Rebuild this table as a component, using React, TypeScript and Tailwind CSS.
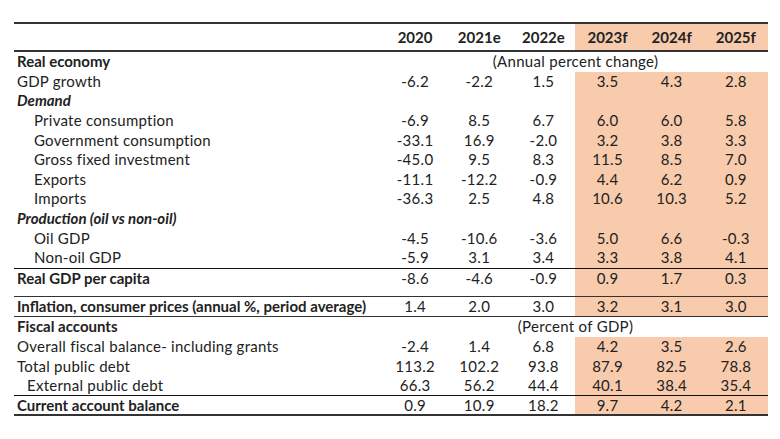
import React from "react";

const OR = "bg-[#f8cbad]";

type Row = {
  label: string;
  kind?: "bold" | "italic" | "normal";
  indent?: "none" | "sm" | "lg";
  vals?: string[];
  note?: string;
  orange?: boolean;
  h?: string;
};

function Cells({ vals, orange }: { vals?: string[]; orange?: boolean }) {
  const v = vals ?? ["", "", "", "", "", ""];
  return (
    <>
      {v.map((x, i) => (
        <div
          key={i}
          className={`w-[64.17px] shrink-0 flex items-center justify-center tracking-[0.3px] ${
            orange && i >= 3 ? OR : ""
          }`}
        >
          {x}
        </div>
      ))}
    </>
  );
}

function DataRow({ r }: { r: Row }) {
  const weight =
    r.kind === "bold"
      ? "font-bold"
      : r.kind === "italic"
      ? "font-bold italic"
      : "tracking-[0.25px]";
  const pad =
    r.indent === "lg" ? "pl-[20px]" : r.indent === "sm" ? "pl-[13px]" : "pl-[3px]";
  return (
    <div className={`flex ${r.h ?? "h-[19.6px]"}`}>
      <div className={`w-[369px] shrink-0 flex items-center whitespace-nowrap ${pad} ${weight}`}>
        {r.label}
      </div>
      {r.note ? (
        <div className="flex-1 flex items-center justify-center tracking-[0.3px]">{r.note}</div>
      ) : (
        <Cells vals={r.vals} orange={r.orange} />
      )}
    </div>
  );
}

export default function App() {
  const block1: Row[] = [
    { label: "Real economy", kind: "bold", note: "(Annual percent change)" },
    { label: "GDP growth", vals: ["-6.2", "-2.2", "1.5", "3.5", "4.3", "2.8"], orange: true },
    { label: "Demand", kind: "italic", orange: true },
    { label: "Private consumption", indent: "lg", vals: ["-6.9", "8.5", "6.7", "6.0", "6.0", "5.8"], orange: true },
    { label: "Government consumption", indent: "lg", vals: ["-33.1", "16.9", "-2.0", "3.2", "3.8", "3.3"], orange: true },
    { label: "Gross fixed investment", indent: "lg", vals: ["-45.0", "9.5", "8.3", "11.5", "8.5", "7.0"], orange: true },
    { label: "Exports", indent: "lg", vals: ["-11.1", "-12.2", "-0.9", "4.4", "6.2", "0.9"], orange: true },
    { label: "Imports", indent: "lg", vals: ["-36.3", "2.5", "4.8", "10.6", "10.3", "5.2"], orange: true },
    { label: "Production (oil vs non-oil)", kind: "italic", orange: true },
    { label: "Oil GDP", indent: "lg", vals: ["-4.5", "-10.6", "-3.6", "5.0", "6.6", "-0.3"], orange: true },
    { label: "Non-oil GDP", indent: "lg", vals: ["-5.9", "3.1", "3.4", "3.3", "3.8", "4.1"], orange: true },
  ];

  return (
    <div
      className="w-[780px] h-[439px] bg-white text-[#222] text-[15px] leading-none pt-[22px] pl-[14px]"
      style={{ fontFamily: "Lato, 'Open Sans', sans-serif" }}
    >
      <div className="w-[754px]">
        <div className="h-[2px] bg-[#333]" />
        <div className="flex h-[26px] font-bold">
          <div className="w-[369px] shrink-0" />
          {["2020", "2021e", "2022e", "2023f", "2024f", "2025f"].map((y, i) => (
            <div
              key={y}
              className={`w-[64.17px] shrink-0 flex items-center justify-center ${
                i >= 3 ? OR : ""
              }`}
            >
              {y}
            </div>
          ))}
        </div>
        <div className="h-[2px] bg-[#333]" />
        {block1.map((r) => (
          <DataRow key={r.label} r={r} />
        ))}
        <div className="h-[1px] bg-[#111]" />
        <DataRow
          r={{
            label: "Real GDP per capita",
            kind: "bold",
            vals: ["-8.6", "-4.6", "-0.9", "0.9", "1.7", "0.3"],
            orange: true,
          }}
        />
        <div className="flex h-[7.5px]">
          <div className="w-[369px] shrink-0" />
          <Cells orange />
        </div>
        <div className="h-[1.5px] bg-[#333]" />
        <DataRow
          r={{
            label: "Inflation, consumer prices (annual %, period average)",
            kind: "bold",
            vals: ["1.4", "2.0", "3.0", "3.2", "3.1", "3.0"],
            orange: true,
            h: "h-[18.5px]",
          }}
        />
        <div className="h-[1.5px] bg-[#333]" />
        <DataRow r={{ label: "Fiscal accounts", kind: "bold", note: "(Percent of GDP)" }} />
        <DataRow
          r={{
            label: "Overall fiscal balance- including grants",
            vals: ["-2.4", "1.4", "6.8", "4.2", "3.5", "2.6"],
            orange: true,
          }}
        />
        <DataRow
          r={{
            label: "Total public debt",
            vals: ["113.2", "102.2", "93.8", "87.9", "82.5", "78.8"],
            orange: true,
          }}
        />
        <DataRow
          r={{
            label: "External public debt",
            indent: "sm",
            vals: ["66.3", "56.2", "44.4", "40.1", "38.4", "35.4"],
            orange: true,
            h: "h-[19px]",
          }}
        />
        <div className="h-[1px] bg-[#111]" />
        <DataRow
          r={{
            label: "Current account balance",
            kind: "bold",
            vals: ["0.9", "10.9", "18.2", "9.7", "4.2", "2.1"],
            orange: true,
            h: "h-[18.5px]",
          }}
        />
        <div className="h-[2px] bg-[#333]" />
      </div>
    </div>
  );
}
